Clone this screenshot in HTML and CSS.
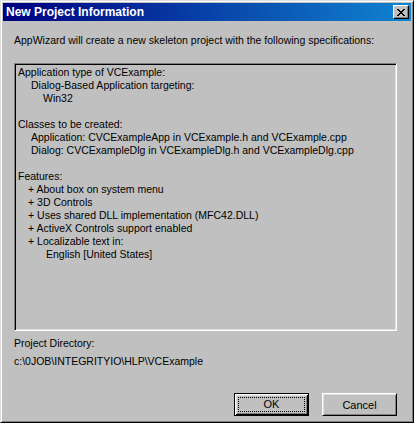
FILE: index.html
```html
<!DOCTYPE html>
<html>
<head>
<meta charset="utf-8">
<link rel="stylesheet" href="styles.css">
</head>
<body>
<div class="window">
  <div class="titlebar">
    <span class="title">New Project Information</span>
    <button class="close" aria-label="Close">
      <svg width="8" height="7" viewBox="0 0 8 7"><path d="M0 0h2v1H0zM6 0h2v1H6zM1 1h2v1H1zM5 1h2v1H5zM2 2h4v1H2zM3 3h2v1H3zM2 4h4v1H2zM1 5h2v1H1zM5 5h2v1H5zM0 6h2v1H0zM6 6h2v1H6z" fill="#000"/></svg>
    </button>
  </div>
  <div class="content">
    <p class="intro">AppWizard will create a new skeleton project with the following specifications:</p>
    <div class="specs">
      <div class="line">Application type of VCExample:</div>
      <div class="line i1">Dialog-Based Application targeting:</div>
      <div class="line i2">Win32</div>
      <div class="line blank"></div>
      <div class="line">Classes to be created:</div>
      <div class="line i1">Application: CVCExampleApp in VCExample.h and VCExample.cpp</div>
      <div class="line i1">Dialog: CVCExampleDlg in VCExampleDlg.h and VCExampleDlg.cpp</div>
      <div class="line blank"></div>
      <div class="line">Features:</div>
      <div class="line f1">+ About box on system menu</div>
      <div class="line f1">+ 3D Controls</div>
      <div class="line f1">+ Uses shared DLL implementation (MFC42.DLL)</div>
      <div class="line f1">+ ActiveX Controls support enabled</div>
      <div class="line f1">+ Localizable text in:</div>
      <div class="line f2">English [United States]</div>
    </div>
    <div class="dir-label">Project Directory:</div>
    <div class="dir-path">c:\0JOB\INTEGRITYIO\HLP\VCExample</div>
    <div class="buttons">
      <button class="btn default"><span class="focus">OK</span></button>
      <button class="btn">Cancel</button>
    </div>
  </div>
</div>
</body>
</html>
```
FILE: styles.css
```css
html, body {
  margin: 0;
  padding: 0;
  background: #c0c0c0;
}
body {
  font-family: "Liberation Sans", Arial, sans-serif;
  font-size: 10.5px;
  color: #000;
}
.window {
  width: 414px;
  height: 423px;
  box-sizing: border-box;
  background: #c0c0c0;
  border: 1px solid;
  border-color: #dfdfdf #000 #000 #dfdfdf;
  box-shadow: inset 1px 1px #fff, inset -1px -1px #808080;
  padding: 2px;
  display: flex;
  flex-direction: column;
}
.titlebar {
  height: 18px;
  background: linear-gradient(to right, #000080, #1084d0);
  display: flex;
  align-items: center;
  justify-content: space-between;
  padding: 0 2px 0 3px;
}
.title {
  color: #fff;
  font-weight: bold;
  font-size: 12px;
}
.close {
  width: 16px;
  height: 14px;
  padding: 0;
  margin: 0;
  background: #c0c0c0;
  border: 1px solid;
  border-color: #fff #000 #000 #fff;
  box-shadow: inset -1px -1px #808080;
  display: flex;
  align-items: center;
  justify-content: center;
}
.close svg {
  display: block;
  margin-left: -1px;
}
.content {
  flex: 1;
  padding: 0 14px 0 11px;
  display: flex;
  flex-direction: column;
}
.intro {
  margin: 13px 0 0 0;
  line-height: 13px;
}
.specs {
  margin-top: 16px;
  height: 268px;
  box-sizing: border-box;
  border: 1px solid;
  border-color: #808080 #fff #fff #808080;
  box-shadow: inset 1px 1px #000, inset -1px -1px #dfdfdf;
  padding: 2px 3px;
}
.line {
  height: 13px;
  line-height: 13px;
  white-space: nowrap;
}
.i1 { padding-left: 13px; }
.i2 { padding-left: 25px; }
.f1 { padding-left: 10px; }
.f2 { padding-left: 28px; }
.dir-label {
  margin-top: 6px;
  line-height: 13px;
}
.dir-path {
  margin-top: 5px;
  line-height: 13px;
}
.buttons {
  margin-top: auto;
  margin-bottom: 4px;
  display: flex;
  justify-content: flex-end;
  gap: 13px;
}
.btn {
  width: 75px;
  height: 23px;
  box-sizing: border-box;
  font-family: inherit;
  font-size: 11px;
  color: #000;
  background: #c0c0c0;
  border: 1px solid;
  border-color: #fff #000 #000 #fff;
  box-shadow: inset 1px 1px #dfdfdf, inset -1px -1px #808080;
  padding: 0;
  display: flex;
  align-items: center;
  justify-content: center;
}
.btn.default {
  border: 1px solid #000;
  box-shadow: inset 1px 1px #fff, inset -1px -1px #000, inset 2px 2px #dfdfdf, inset -2px -2px #808080;
}
.focus {
  width: 65px;
  height: 13px;
  line-height: 13px;
  outline: 1px dotted #000;
  text-align: center;
}
```
